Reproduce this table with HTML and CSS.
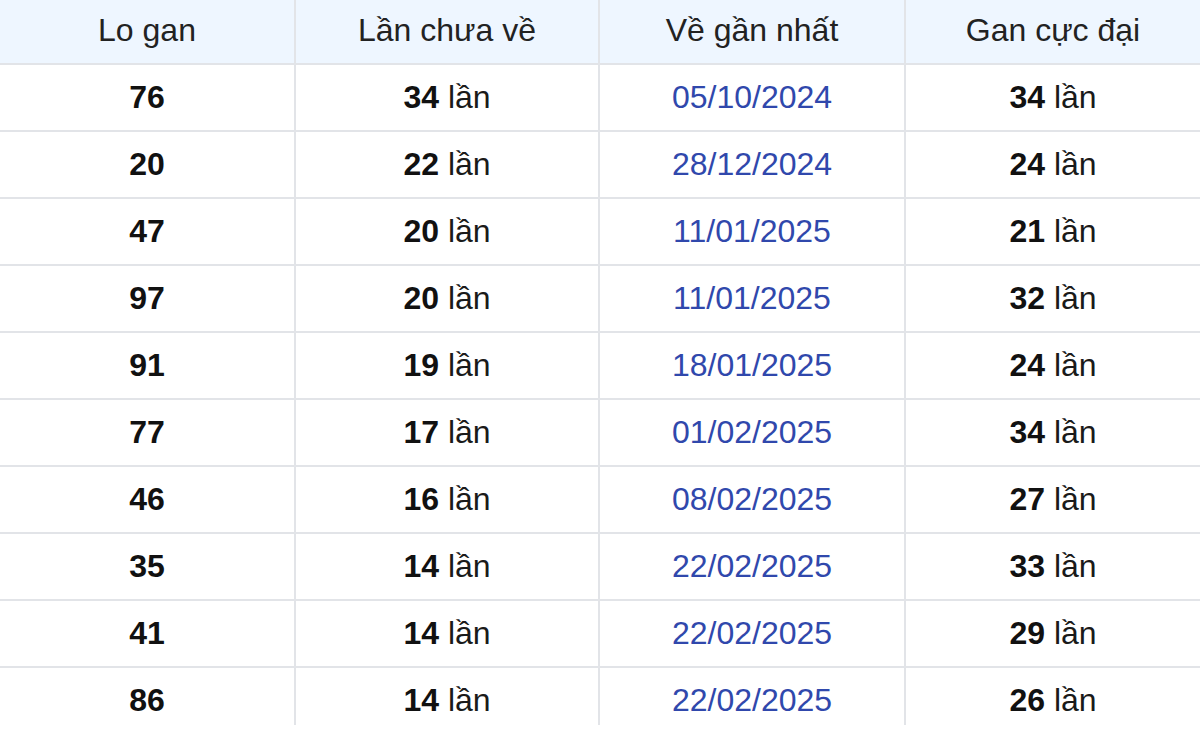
FILE: index.html
```html
<!DOCTYPE html>
<html lang="vi">
<head>
<meta charset="utf-8">
<title>Lo gan</title>
<link rel="stylesheet" href="styles.css">
</head>
<body>
<div class="wrap">
<table class="gan">
<colgroup>
<col class="c1"><col class="c2"><col class="c3"><col class="c4">
</colgroup>
<thead>
<tr><th>Lo gan</th><th>Lần chưa về</th><th>Về gần nhất</th><th>Gan cực đại</th></tr>
</thead>
<tbody>
<tr><td><b>76</b></td><td><b>34</b> lần</td><td class="date">05/10/2024</td><td><b>34</b> lần</td></tr>
<tr><td><b>20</b></td><td><b>22</b> lần</td><td class="date">28/12/2024</td><td><b>24</b> lần</td></tr>
<tr><td><b>47</b></td><td><b>20</b> lần</td><td class="date">11/01/2025</td><td><b>21</b> lần</td></tr>
<tr><td><b>97</b></td><td><b>20</b> lần</td><td class="date">11/01/2025</td><td><b>32</b> lần</td></tr>
<tr><td><b>91</b></td><td><b>19</b> lần</td><td class="date">18/01/2025</td><td><b>24</b> lần</td></tr>
<tr><td><b>77</b></td><td><b>17</b> lần</td><td class="date">01/02/2025</td><td><b>34</b> lần</td></tr>
<tr><td><b>46</b></td><td><b>16</b> lần</td><td class="date">08/02/2025</td><td><b>27</b> lần</td></tr>
<tr><td><b>35</b></td><td><b>14</b> lần</td><td class="date">22/02/2025</td><td><b>33</b> lần</td></tr>
<tr><td><b>41</b></td><td><b>14</b> lần</td><td class="date">22/02/2025</td><td><b>29</b> lần</td></tr>
<tr><td><b>86</b></td><td><b>14</b> lần</td><td class="date">22/02/2025</td><td><b>26</b> lần</td></tr>
</tbody>
</table>
</div>
</body>
</html>
```
FILE: styles.css
```css
html, body {
  margin: 0;
  padding: 0;
  background: #ffffff;
}
.wrap {
  width: 1200px;
  height: 725px;
  overflow: hidden;
}
.gan {
  width: 1200px;
  table-layout: fixed;
  border-collapse: separate;
  border-spacing: 0;
  font-family: "Liberation Sans", Arial, sans-serif;
  font-size: 32px;
  color: #1f1f1f;
}
.c1 { width: 296px; }
.c2 { width: 304px; }
.c3 { width: 306px; }
.c4 { width: 294px; }
.gan th, .gan td {
  padding: 0;
  text-align: center;
  vertical-align: middle;
  border-bottom: 2px solid #e2e4e8;
  border-right: 2px solid #e2e4e8;
  box-sizing: border-box;
}
.gan th:last-child, .gan td:last-child {
  border-right: none;
}
.gan th {
  height: 65px;
  padding-bottom: 2px;
  font-weight: normal;
  background: #eef6ff;
  color: #222222;
}
.gan td {
  height: 67px;
  color: #1a1a1a;
}
.gan td b {
  font-weight: bold;
  color: #111111;
}
.gan td.date {
  color: #3048ac;
}
```
